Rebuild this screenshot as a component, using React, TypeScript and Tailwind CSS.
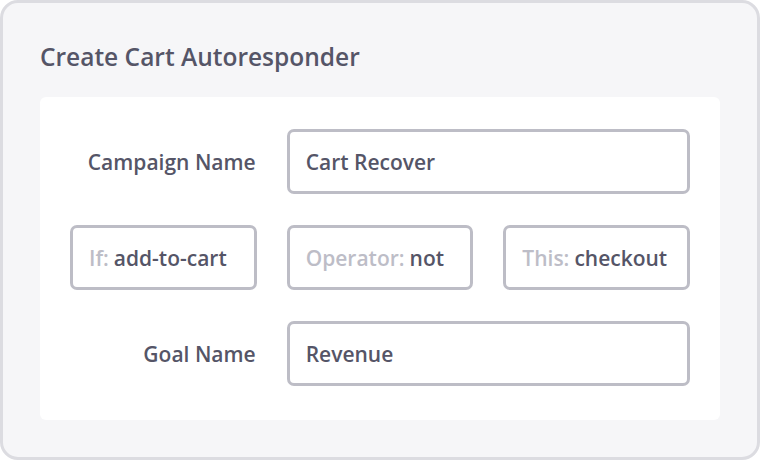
const font = { fontFamily: '"Open Sans", "Lato", sans-serif' };

const fieldBox =
  "flex h-[65px] items-center rounded-[7px] border-[3px] border-[#bdbdc6] bg-white pl-[16px] pt-[2px] text-[21px] font-semibold text-[#555567]";

const Field = ({ prefix, value, className = "" }: { prefix?: string; value: string; className?: string }) => (
  <div className={`${fieldBox} ${className}`}>
    {prefix && <span className="mr-[5px] text-[#bdbdc7]">{prefix}</span>}
    <span>{value}</span>
  </div>
);

const Label = ({ text }: { text: string }) => (
  <div className="flex h-[65px] items-center justify-end pr-px pt-[2px] text-[21px] font-semibold text-[#555567]">{text}</div>
);

export default function App() {
  return (
    <div style={font} className="h-[460px] w-[760px] bg-white">
      <div className="h-full w-full rounded-[18px] border-[3px] border-[#dcdce1] bg-[#f6f6f8] px-[37px] pt-[38px]">
        <h1 className="mb-[24px] h-[32px] text-[24.5px] leading-[32px] font-semibold text-[#555567]">
          Create Cart Autoresponder
        </h1>
        <div className="rounded-[6px] bg-white px-[30px] pt-[32px] pb-[34px]">
          <div className="grid grid-cols-3 gap-x-[30px] gap-y-[31px]">
            <Label text="Campaign Name" />
            <Field value="Cart Recover" className="col-span-2" />
            <Field prefix="If:" value="add-to-cart" />
            <Field prefix="Operator:" value="not" />
            <Field prefix="This:" value="checkout" />
            <Label text="Goal Name" />
            <Field value="Revenue" className="col-span-2" />
          </div>
        </div>
      </div>
    </div>
  );
}
